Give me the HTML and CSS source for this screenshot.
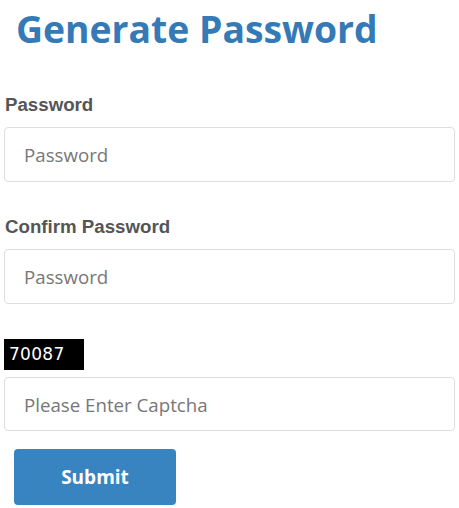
FILE: index.html
```html
<!DOCTYPE html>
<html>
<head>
<meta charset="utf-8">
<link rel="stylesheet" href="styles.css">
</head>
<body>
<div class="page">
  <h1 class="title">Generate Password</h1>
  <form class="form">
    <div class="field">
      <label class="label">Password</label>
      <input class="input" type="password" placeholder="Password">
    </div>
    <div class="field">
      <label class="label">Confirm Password</label>
      <input class="input" type="password" placeholder="Password">
    </div>
    <div class="field captcha-field">
      <div class="captcha">70087</div>
      <input class="input input-captcha" type="text" placeholder="Please Enter Captcha">
    </div>
    <button class="submit" type="button">Submit</button>
  </form>
</div>
</body>
</html>
```
FILE: styles.css
```css
html, body {
  margin: 0;
  padding: 0;
  background: #fff;
}
.page {
  padding: 0 4px;
}
.title {
  margin: 9px 0 0 12px;
  font-family: "Open Sans", sans-serif;
  font-weight: 700;
  font-size: 37.3px;
  line-height: 40px;
  color: #337ab7;
}
.form {
  display: flex;
  flex-direction: column;
  margin-top: 46px;
}
.field {
  display: flex;
  flex-direction: column;
  gap: 12px;
  margin-bottom: 35px;
}
.label {
  margin-left: 1px;
  font-family: "Liberation Sans", Arial, sans-serif;
  font-weight: 700;
  font-size: 18.7px;
  line-height: 20px;
  color: #555;
}
.input {
  box-sizing: border-box;
  height: 55px;
  width: 100%;
  margin: 0;
  padding: 0 19px;
  border: 1px solid #dedede;
  border-radius: 4px;
  font-family: "Open Sans", sans-serif;
  font-size: 18.7px;
  color: #555;
  background: #fff;
  outline: none;
}
.input::placeholder {
  color: #777;
}
.captcha-field {
  gap: 7px;
  margin-bottom: 18px;
}
.captcha {
  width: 80px;
  height: 31px;
  box-sizing: border-box;
  background: #000;
  color: #fff;
  font-family: "DejaVu Sans", sans-serif;
  font-size: 17px;
  line-height: 31px;
  padding-left: 5px;
  letter-spacing: 0.3px;
}
.input-captcha {
  height: 54px;
}
.submit {
  align-self: flex-start;
  margin-left: 10px;
  width: 162px;
  height: 56px;
  border: none;
  border-radius: 4px;
  background: #3884c0;
  color: #fff;
  font-family: "Open Sans", sans-serif;
  font-weight: 700;
  font-size: 19px;
  padding: 0;
  cursor: pointer;
}
```
